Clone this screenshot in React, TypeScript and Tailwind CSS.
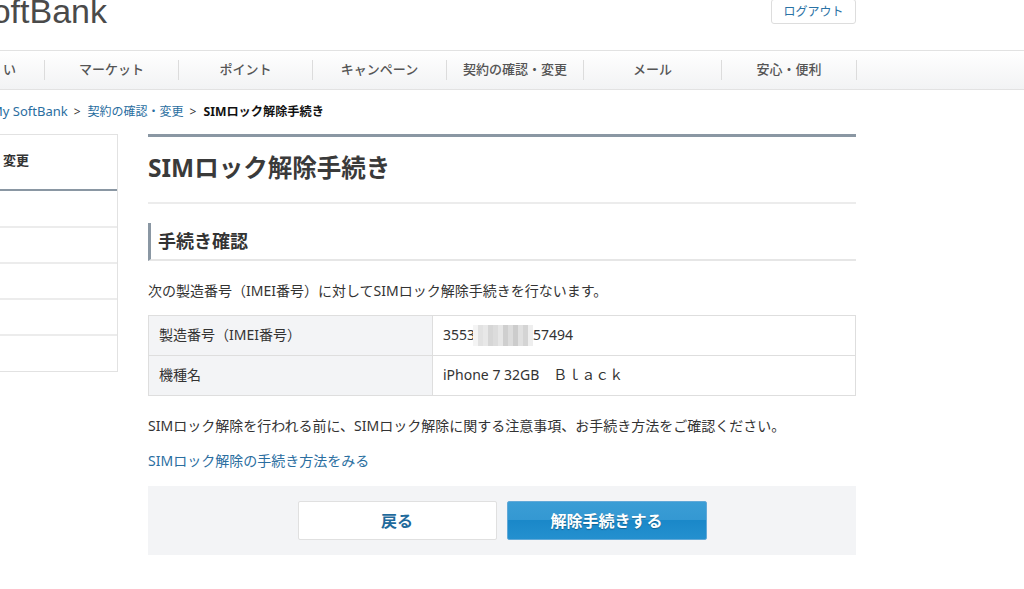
const navItems = [
  { label: "マーケット", width: "w-[134px]" },
  { label: "ポイント", width: "w-[134px]" },
  { label: "キャンペーン", width: "w-[134px]" },
  { label: "契約の確認・変更", width: "w-[137px]" },
  { label: "メール", width: "w-[138px]" },
  { label: "安心・便利", width: "w-[135px]" },
];

const blurCells = [
  "bg-[#f4f4f4]", "bg-[#e2e2e2]", "bg-[#e8e8e8]", "bg-[#d6d6d6]", "bg-[#dcdcdc]", "bg-[#e6e6e6]",
  "bg-[#cfcfcf]", "bg-[#dcdcdc]", "bg-[#cccccc]", "bg-[#e0e0e0]", "bg-[#d4d4d4]", "bg-[#eeeeee]",
];

const App = () => {
  return (
    <div className="w-[1024px] h-[589px] overflow-hidden bg-white text-[#333] font-['Noto_Sans','Noto_Sans_CJK_JP',sans-serif]">
      {/* Header */}
      <div className="h-[50px] flex justify-between items-start pr-[168px] overflow-hidden">
        <div className="ml-[-31px] mt-[-9px] text-[34px] leading-[40px] text-[#4a4a4a] font-['Liberation_Sans',sans-serif]">SoftBank</div>
        <button className="w-[85px] h-[25px] mt-[-1px] bg-white border border-[#dddddd] rounded-[3px] text-[12px] leading-[20px] text-[#2a72a5]">
          ログアウト
        </button>
      </div>

      {/* Global nav */}
      <div className="h-[40px] flex border-y border-[#e2e2e2] bg-gradient-to-b from-white to-[#f2f3f4]">
        <div className="w-[45px] flex justify-end items-center my-[9px] border-r border-[#dcdcdc] text-[13px] font-medium text-[#555] whitespace-nowrap overflow-hidden">
          <span className="pr-[28px]">い</span>
        </div>
        {navItems.map((item) => (
          <div key={item.label} className={`${item.width} my-[9px] flex items-center justify-center border-r border-[#dcdcdc] text-[13px] font-medium text-[#555] whitespace-nowrap`}>
            {item.label}
          </div>
        ))}
      </div>

      {/* Breadcrumb */}
      <div className="h-[44px] flex items-center ml-[-9px] text-[12px] whitespace-nowrap">
        <span className="text-[13px] text-[#2a6e9f]">My SoftBank</span>
        <span className="ml-[6px] mr-[7px]">&gt;</span>
        <span className="text-[#2a6e9f]">契約の確認・変更</span>
        <span className="ml-[6px] mr-[7px]">&gt;</span>
        <span className="text-[12.2px] font-bold text-[#111]">SIMロック解除手続き</span>
      </div>

      <div className="flex">
        {/* Side menu */}
        <div className="w-[118px] h-[238px] border-y border-r border-[#e2e2e2]">
          <div className="h-[56px] flex items-center pl-[3px] pb-[2px] border-b-2 border-[#8a97a3] text-[13px] font-bold">変更</div>
          <div className="h-[37px] border-b-2 border-[#ececec]" />
          <div className="h-[36px] border-b-2 border-[#ececec]" />
          <div className="h-[36px] border-b-2 border-[#ececec]" />
          <div className="h-[36px] border-b-2 border-[#ececec]" />
        </div>

        {/* Main */}
        <div className="w-[708px] ml-[30px] border-t-[3px] border-[#8a97a3]">
          <h1 className="h-[67px] flex items-center pb-[2px] border-b-2 border-[#ececec] text-[24.5px] font-bold text-[#3a3a3a]">SIMロック解除手続き</h1>

          <h2 className="h-[38px] mt-[19px] flex items-center pl-[7px] border-l-[3px] border-b-2 border-l-[#8a97a3] border-b-[#e6e6e6] text-[18px] font-bold">手続き確認</h2>

          <p className="mt-[19px] text-[14px] leading-[22px]">次の製造番号（IMEI番号）に対してSIMロック解除手続きを行ないます。</p>

          <div className="mt-[13px] border border-[#dedede] text-[14px]">
            <div className="flex h-[40px] border-b border-[#dedede]">
              <div className="w-[284px] flex items-center pl-[10px] pb-[2px] bg-[#f3f4f6] border-r border-[#dedede]">製造番号（IMEI番号）</div>
              <div className="flex items-center pl-[10px] pb-[2px]">
                <span>3553</span>
                <span className="flex ml-[-2px] mt-[1px]">
                  {blurCells.map((c, i) => (
                    <span key={i} className={`w-[5px] h-[21px] ${c}`} />
                  ))}
                </span>
                <span>57494</span>
              </div>
            </div>
            <div className="flex h-[39px]">
              <div className="w-[284px] flex items-center pl-[10px] pb-[2px] bg-[#f3f4f6] border-r border-[#dedede]">機種名</div>
              <div className="flex items-center pl-[10px] pb-[2px] whitespace-pre">iPhone 7 32GB　Ｂｌａｃｋ</div>
            </div>
          </div>

          <p className="mt-[19px] text-[14px] leading-[22px]">SIMロック解除を行われる前に、SIMロック解除に関する注意事項、お手続き方法をご確認ください。</p>
          <p className="mt-[13px] text-[14px] leading-[22px] text-[#2a6e9f]">SIMロック解除の手続き方法をみる</p>

          <div className="h-[69px] mt-[14px] flex justify-center items-center gap-[10px] bg-[#f3f4f6]">
            <button className="w-[199px] h-[39px] bg-white border border-[#e0e0e0] rounded-[2px] text-[16px] font-bold text-[#1f6a9c]">戻る</button>
            <button className="w-[200px] h-[39px] border border-[#62a9d8] rounded-[2px] bg-[linear-gradient(#3a9dd5_0%,#3498d2_48%,#1a88c9_50%,#2490cf_100%)] text-[16px] font-bold text-white [text-shadow:0_1px_1px_rgba(0,0,0,0.3)]">解除手続きする</button>
          </div>
        </div>
      </div>
    </div>
  );
};

export default App;
